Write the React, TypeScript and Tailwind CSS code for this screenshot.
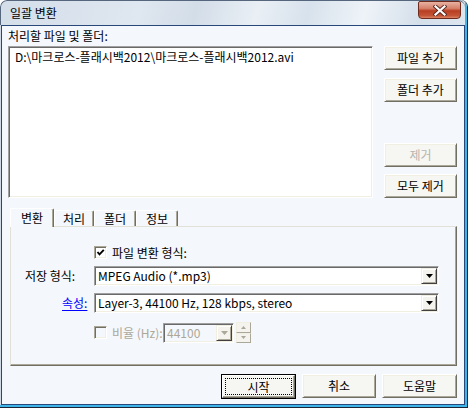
const font = "font-['Noto_Sans_CJK_KR','Liberation_Sans',sans-serif]";

function Btn({
  label,
  width,
  disabled = false,
  isDefault = false,
}: {
  label: string;
  width: string;
  disabled?: boolean;
  isDefault?: boolean;
}) {
  if (isDefault) {
    return (
      <div className={`${width} h-[25px] border border-black`}>
        <div className="flex h-full items-center justify-center border border-t-white border-l-white border-r-[#716f64] border-b-[#716f64] bg-[#f6f6f2] shadow-[inset_-1px_-1px_0_#aca899]">
          <span className="flex h-[17px] w-[67px] items-center justify-center border border-dotted border-black text-[12px] leading-none">
            {label}
          </span>
        </div>
      </div>
    );
  }
  return (
    <div
      className={`${width} flex h-[24px] items-center justify-center border border-t-white border-l-white border-r-[#716f64] border-b-[#716f64] bg-[#f6f6f2] shadow-[inset_1px_1px_0_#f1efe2,inset_-1px_-1px_0_#aca899] text-[12px] leading-none ${
        disabled ? 'text-[#b5b4ae]' : 'text-black'
      }`}
    >
      {label}
    </div>
  );
}

function DropBtn({ disabled = false }: { disabled?: boolean }) {
  return (
    <div className="flex h-full w-[16px] items-center justify-center border border-t-[#f1efe2] border-l-[#f1efe2] border-r-[#404040] border-b-[#404040] bg-[#f4f3ee] shadow-[inset_1px_1px_0_#fff,inset_-1px_-1px_0_#aca899]">
      <svg width="7" height="4" viewBox="0 0 7 4" aria-hidden="true">
        <polygon points="0,0 7,0 3.5,4" fill={disabled ? '#aca899' : '#000'} />
      </svg>
    </div>
  );
}

function Combo({ text, width, disabled = false }: { text: string; width: string; disabled?: boolean }) {
  return (
    <div
      className={`${width} flex h-[20px] border border-t-[#a0a0a0] border-l-[#a0a0a0] border-r-white border-b-white shadow-[inset_1px_1px_0_#696969,inset_-1px_-1px_0_#f1efe2] p-[1px] ${
        disabled ? 'bg-[#f4f7fc] text-[#aca899]' : 'bg-white text-black'
      }`}
    >
      <span className="flex-1 truncate pl-[2px] text-[12px] leading-[16px]">{text}</span>
      <DropBtn disabled={disabled} />
    </div>
  );
}

function CheckBox({ checked, disabled = false }: { checked: boolean; disabled?: boolean }) {
  return (
    <div
      className={`flex h-[13px] w-[13px] items-center justify-center border border-t-[#aca899] border-l-[#aca899] border-r-white border-b-white shadow-[inset_1px_1px_0_#716f64,inset_-1px_-1px_0_#f1efe2] ${
        disabled ? 'bg-[#f4f7fc]' : 'bg-white'
      }`}
    >
      {checked && (
        <svg width="9" height="9" viewBox="0 0 9 9" aria-hidden="true">
          <path d="M1.5 4 L3.5 6.3 L7.8 1.8" stroke="#000" strokeWidth="1.9" fill="none" />
        </svg>
      )}
    </div>
  );
}

export default function App() {
  return (
    <div
      className={`flex h-[408px] w-[468px] flex-col overflow-hidden rounded-t-[7px] border-r border-b border-[#1b2536] bg-[#cfdae6] ${font} text-[12px] leading-[16px] text-black`}
    >
      <div className="flex flex-1 flex-col border-r-2 border-b-2 border-[#3eb5e8]">
        {/* Title bar */}
        <div className="flex h-[25px] items-start rounded-t-[7px] border-t border-l border-[#56677d] bg-[linear-gradient(105deg,#d4dee9_0%,#dfe7f0_30%,#d3dde8_42%,#e9eff5_55%,#d8e2ec_66%,#eef3f8_78%,#d5dfea_90%,#dde6ef_100%)] pr-[4px] pl-[9px]">
          <span className="mt-[4px] text-[12px] leading-[16px] text-black">일괄 변환</span>
          <div className="ml-auto flex h-[18px] w-[43px] items-center justify-center rounded-b-[4px] rounded-t-[2px] border border-[#6e2a1c] bg-[linear-gradient(#e8b2a2,#d5806a_40%,#b93e22_55%,#c45436_85%,#dc8464)]">
            <svg width="14" height="11" viewBox="0 0 14 11" aria-hidden="true">
              <path d="M2.5 1.5 L11.5 9.5 M11.5 1.5 L2.5 9.5" stroke="#5a2a22" strokeWidth="4" strokeLinecap="square" />
              <path d="M2.5 1.5 L11.5 9.5 M11.5 1.5 L2.5 9.5" stroke="#fff" strokeWidth="2.2" strokeLinecap="square" />
            </svg>
          </div>
        </div>

        {/* Client area */}
        <div className="ml-[1px] flex flex-1 flex-col border border-[#29487a] bg-[#f4f7fc]">
          <div className="mt-[2px] ml-[6px] h-[16px]">처리할 파일 및 폴더:</div>

          <div className="mt-[2px] ml-[6px] flex">
            <div className="h-[152px] w-[365px] border border-t-[#a0a0a0] border-l-[#a0a0a0] border-r-white border-b-white bg-white px-[6px] pt-[2px] shadow-[inset_1px_1px_0_#696969,inset_-1px_-1px_0_#f1efe2]">
              D:\마크로스-플래시백2012\마크로스-플래시백2012.avi
            </div>
            <div className="ml-[11px] flex flex-col">
              <Btn label="파일 추가" width="w-[73px]" />
              <div className="mt-[8px]">
                <Btn label="폴더 추가" width="w-[73px]" />
              </div>
              <div className="mt-[41px]">
                <Btn label="제거" width="w-[73px]" disabled />
              </div>
              <div className="mt-[7px]">
                <Btn label="모두 제거" width="w-[73px]" />
              </div>
            </div>
          </div>

          {/* Tabs */}
          <div className="mt-[10px] ml-[8px] flex h-[18px] items-end">
            <div className="relative z-10 -mb-[1px] flex h-[19px] w-[44px] items-center justify-center rounded-t-[2px] border-t border-l border-r border-t-white border-l-white border-r-[#716f64] bg-[#f4f7fc] shadow-[inset_-1px_0_0_#aca899]">
              변환
            </div>
            {[
              ['처리', 'w-[40px]'],
              ['폴더', 'w-[42px]'],
              ['정보', 'w-[42px]'],
            ].map(([t, w]) => (
              <div
                key={t}
                className={`${w} flex h-[16px] items-center justify-center rounded-t-[2px] border-t border-l border-r border-t-white border-l-white border-r-[#716f64] bg-[#f4f7fc] shadow-[inset_-1px_0_0_#aca899]`}
              >
                {t}
              </div>
            ))}
          </div>

          {/* Tab panel */}
          <div className="ml-[8px] flex h-[140px] w-[447px] flex-col border border-t-[#e2e1d8] border-l-[#e2e1d8] border-r-[#716f64] border-b-[#716f64] shadow-[inset_-1px_-1px_0_#aca899]">
            <div className="mt-[19px] ml-[83px] flex h-[13px] items-center">
              <CheckBox checked />
              <span className="ml-[5px]">파일 변환 형식:</span>
            </div>

            <div className="mt-[7px] flex items-center">
              <div className="w-[83px] pl-[14px]">저장 형식:</div>
              <Combo text="MPEG Audio (*.mp3)" width="w-[345px]" />
            </div>

            <div className="mt-[7px] flex items-center">
              <div className="w-[83px] pl-[51px]">
                <span className="text-[#0000ff] underline underline-offset-2">속성:</span>
              </div>
              <Combo text="Layer-3, 44100 Hz, 128 kbps, stereo" width="w-[345px]" />
            </div>

            <div className="mt-[9px] flex items-center">
              <div className="w-[83px]" />
              <CheckBox checked={false} disabled />
              <span className="ml-[5px] w-[51px] text-[#aca899]">비율 (Hz):</span>
              <Combo text="44100" width="w-[71px]" disabled />
              <div className="ml-[2px] flex h-[21px] w-[15px] flex-col">
                {['up', 'down'].map((d) => (
                  <div
                    key={d}
                    className="flex flex-1 items-center justify-center border border-t-[#f1efe2] border-l-[#f1efe2] border-r-[#aca899] border-b-[#aca899] bg-[#f4f3ee]"
                  >
                    <svg width="5" height="3" viewBox="0 0 5 3" aria-hidden="true">
                      <polygon points={d === 'up' ? '0,3 5,3 2.5,0' : '0,0 5,0 2.5,3'} fill="#aca899" />
                    </svg>
                  </div>
                ))}
              </div>
            </div>
          </div>

          {/* Dialog buttons */}
          <div className="mt-[8px] flex justify-end gap-[6px] pr-[7px]">
            <Btn label="시작" width="w-[75px]" isDefault />
            <Btn label="취소" width="w-[74px]" />
            <Btn label="도움말" width="w-[75px]" />
          </div>
        </div>
      </div>
    </div>
  );
}
